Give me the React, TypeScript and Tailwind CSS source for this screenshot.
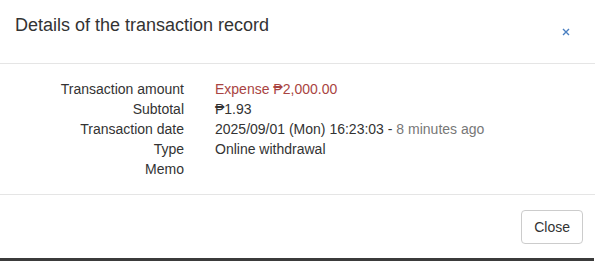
const rows: { label: string; value: React.ReactNode }[] = [
  {
    label: "Transaction amount",
    value: <span className="text-[#a94442]">Expense ₱2,000.00</span>,
  },
  { label: "Subtotal", value: "₱1.93" },
  {
    label: "Transaction date",
    value: (
      <>
        2025/09/01 (Mon) 16:23:03 -{" "}
        <span className="text-[#777777]">8 minutes ago</span>
      </>
    ),
  },
  { label: "Type", value: "Online withdrawal" },
  { label: "Memo", value: "" },
];

export default function App() {
  return (
    <div
      className="w-[597px] h-[261px] bg-white overflow-hidden text-[#333333]"
      style={{ fontFamily: '"Liberation Sans", Arial, sans-serif' }}
    >
      <div className="w-[595px] h-[258px] bg-white flex flex-col">
        <div className="h-[64px] border-b border-[#e5e5e5] flex items-start justify-between pl-[15px] pr-[25px] pt-[12px]">
          <h4 className="text-[18px] leading-[26px]">
            Details of the transaction record
          </h4>
          <button className="mt-[16px] text-[#4a7fc1]">
            <svg width="8" height="8" viewBox="0 0 8 8">
              <path
                d="M1 1L7 7M7 1L1 7"
                stroke="currentColor"
                strokeWidth="1.4"
              />
            </svg>
          </button>
        </div>
        <div className="h-[131px] border-b border-[#e5e5e5] pt-[15px] text-[14px] leading-[20px]">
          {rows.map((r) => (
            <div key={r.label} className="flex">
              <div className="w-[184px] text-right shrink-0">{r.label}</div>
              <div className="ml-[31px]">{r.value}</div>
            </div>
          ))}
        </div>
        <div className="flex justify-end pt-[15px] pr-[12px]">
          <button className="h-[34px] px-[12px] border border-[#cccccc] rounded-[4px] text-[14px] text-[#333333] bg-white">
            Close
          </button>
        </div>
      </div>
      <div className="w-[594px] h-[3px] bg-[#3b3b3b]" />
    </div>
  );
}
